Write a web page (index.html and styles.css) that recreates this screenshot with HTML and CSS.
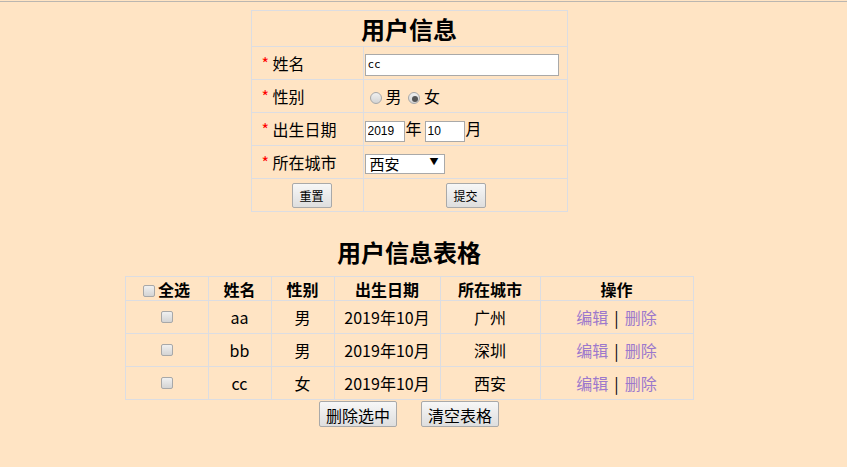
FILE: index.html
```html
<!DOCTYPE html>
<html lang="zh-CN">
<head>
    <meta charset="UTF-8">
    <title>用户信息</title>
    <link rel="stylesheet" href="styles.css">
</head>
<body>
    <div class="topline"></div>
    <div class="page">
        <table class="form">
            <tr>
                <th colspan="2" class="form-title">用户信息</th>
            </tr>
            <tr>
                <td class="label"><span class="star">*</span> 姓名</td>
                <td><input type="text" class="name" value="cc"></td>
            </tr>
            <tr>
                <td class="label"><span class="star">*</span> 性别</td>
                <td class="sex">
                    <label><input type="radio" name="sex" class="radio">男</label>
                    <label><input type="radio" name="sex" class="radio" checked>女</label>
                </td>
            </tr>
            <tr>
                <td class="label"><span class="star">*</span> 出生日期</td>
                <td><input type="text" class="num" value="2019"><span class="unit">年</span><input type="text" class="num" value="10"><span class="unit">月</span></td>
            </tr>
            <tr>
                <td class="label"><span class="star">*</span> 所在城市</td>
                <td>
                    <div class="select"><span>西安</span><span class="arrow">▼</span></div>
                </td>
            </tr>
            <tr>
                <td class="center first"><button class="btn small">重置</button></td>
                <td class="center"><button class="btn small">提交</button></td>
            </tr>
        </table>

        <h2 class="list-title">用户信息表格</h2>

        <table class="list">
            <tr>
                <th class="c1"><input type="checkbox" class="check">全选</th>
                <th class="c2">姓名</th>
                <th class="c3">性别</th>
                <th class="c4">出生日期</th>
                <th class="c5">所在城市</th>
                <th class="c6">操作</th>
            </tr>
            <tr>
                <td><input type="checkbox" class="check"></td>
                <td>aa</td>
                <td>男</td>
                <td>2019年10月</td>
                <td>广州</td>
                <td><a href="#">编辑</a><span class="sep">|</span><a href="#">删除</a></td>
            </tr>
            <tr>
                <td><input type="checkbox" class="check"></td>
                <td>bb</td>
                <td>男</td>
                <td>2019年10月</td>
                <td>深圳</td>
                <td><a href="#">编辑</a><span class="sep">|</span><a href="#">删除</a></td>
            </tr>
            <tr>
                <td><input type="checkbox" class="check"></td>
                <td>cc</td>
                <td>女</td>
                <td>2019年10月</td>
                <td>西安</td>
                <td><a href="#">编辑</a><span class="sep">|</span><a href="#">删除</a></td>
            </tr>
        </table>

        <div class="actions">
            <button class="btn">删除选中</button>
            <button class="btn">清空表格</button>
        </div>
    </div>
</body>
</html>
```

FILE: styles.css
```css
body {
    margin: 0;
    background: #ffe4c4;
    font-family: "Microsoft YaHei", "Noto Sans CJK SC", sans-serif;
    font-size: 16px;
    color: #000;
}
.topline {
    margin-top: 1px;
    height: 1px;
    background: #bbb6b0;
}
.page {
    width: 818px;
    padding-top: 8px;
}
table {
    border-collapse: collapse;
    margin: 0 auto;
}
td, th {
    border: 1px solid #dcdde2;
    padding: 0;
}

/* form */
.form {
    width: 317px;
}
.form td {
    height: 32px;
}
.form-title {
    height: 35px;
    font-size: 24px;
    font-weight: bold;
    line-height: 1;
}
.label {
    width: 101px;
    padding-left: 10px !important;
}
.star {
    color: red;
}
.form td:nth-child(2) {
    padding-left: 1px;
}
.name {
    width: 188px;
    height: 16px;
    border: 1px solid #a9a9a9;
    padding: 2px 2px;
    font-family: "DejaVu Sans Mono", monospace;
    font-size: 11px;
    vertical-align: middle;
}
.sex {
    padding-left: 6px !important;
}
.sex label {
    margin-right: 3px;
}
.radio {
    appearance: none;
    width: 12px;
    height: 12px;
    margin: 0 4px 0 0;
    border: 1px solid #a8a8a8;
    border-radius: 50%;
    background: linear-gradient(#f0f0f0, #d4d4d4);
    vertical-align: -1px;
    position: relative;
}
.radio:checked::after {
    content: "";
    position: absolute;
    left: 3px;
    top: 3px;
    width: 6px;
    height: 6px;
    border-radius: 50%;
    background: #555;
}
.num {
    width: 34px;
    height: 15px;
    border: 1px solid #a9a9a9;
    padding: 2px 2px;
    font-family: "Liberation Sans", sans-serif;
    font-size: 12px;
    vertical-align: middle;
}
.unit {
    margin: 0 3px 0 1px;
}
.select {
    display: inline-flex;
    align-items: center;
    justify-content: space-between;
    width: 69px;
    height: 18px;
    padding: 0 5px 0 4px;
    border: 1px solid #a9a9a9;
    background: #fff;
    font-size: 15px;
    line-height: 18px;
    vertical-align: middle;
}
.arrow {
    font-size: 9px;
    margin-top: -4px;
}
.center {
    text-align: center;
}
.center.first {
    padding-left: 9px;
}
.btn {
    font-family: "Microsoft YaHei", "Noto Sans CJK SC", sans-serif;
    font-size: 16px;
    padding: 1px 6px;
    height: 26px;
    border: 1px solid #a9a9a9;
    border-radius: 2px;
    background: linear-gradient(#f7f7f7, #dedede);
    color: #000;
}
.btn.small {
    font-size: 12px;
    height: 25px;
    width: 40px;
    padding: 0;
}

/* list */
.list-title {
    margin: 22px 0 6px;
    text-align: center;
    font-size: 24px;
    line-height: 36px;
}
.list {
    width: 569px;
    text-align: center;
}
.list th {
    height: 23px;
    font-weight: bold;
    line-height: 1;
}
.list td {
    height: 32px;
}
.c1 { width: 82px; }
.c2 { width: 62px; }
.c3 { width: 62px; }
.c4 { width: 105px; }
.c5 { width: 99px; }
.c6 { width: 152px; }
.check {
    appearance: none;
    width: 12px;
    height: 12px;
    margin: 0 3px 0 0;
    border: 1px solid #a8a8a8;
    border-radius: 2px;
    background: linear-gradient(#f0f0f0, #d4d4d4);
    vertical-align: -1px;
}
.list td .check {
    margin: 0;
    vertical-align: 1px;
}
a {
    color: #9c79cc;
    text-decoration: none;
}
.sep {
    margin: 0 6px;
}
.actions {
    display: flex;
    justify-content: center;
    gap: 24px;
    margin-top: 1px;
}
```
